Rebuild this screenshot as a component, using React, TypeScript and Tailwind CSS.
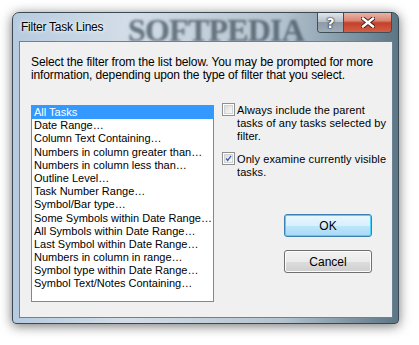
import React from "react";

const items = [
  "All Tasks",
  "Date Range…",
  "Column Text Containing…",
  "Numbers in column greater than…",
  "Numbers in column less than…",
  "Outline Level…",
  "Task Number Range…",
  "Symbol/Bar type…",
  "Some Symbols within Date Range…",
  "All Symbols within Date Range…",
  "Last Symbol within Date Range…",
  "Numbers in column in range…",
  "Symbol type within Date Range…",
  "Symbol Text/Notes Containing…",
];

const font = "font-['Segoe_UI','Liberation_Sans',Arial,sans-serif]";

function Checkbox({ checked }: { checked: boolean }) {
  return (
    <div className="w-[13px] h-[13px] shrink-0 border border-[#8e8f8f] bg-white p-[1px] mt-[-1px]">
      <div className="w-full h-full border border-[#d0d2d6] bg-gradient-to-br from-[#dcdcdc] to-[#fafafa] relative">
        {checked && (
          <svg viewBox="0 0 9 9" className="absolute inset-0 w-full h-full">
            <path d="M1.5 4.5 L3.5 7 L7.8 1.2" fill="none" stroke="#3c5aa8" strokeWidth="1.6" />
          </svg>
        )}
      </div>
    </div>
  );
}

export default function App() {
  return (
    <div className={`w-[419px] h-[345px] bg-white overflow-hidden ${font} text-[12px] text-black`}>
      <div className="ml-[12px] mt-[12px] w-[387px] h-[312px] rounded-t-[7px] rounded-b-[4px] border border-[#3a4953] shadow-[0_2px_12px_rgba(0,0,0,0.55)] bg-[linear-gradient(to_right,#b6cbe0_0%,#d3dde7_30%,#b4c3cf_70%,#5c7685_100%)] flex flex-col relative overflow-hidden">
        {/* watermark */}
        <div className="absolute left-[115px] top-[-1px] pointer-events-none text-[32px] leading-[36px] font-bold font-['Liberation_Serif',serif] tracking-[-0.8px] whitespace-nowrap text-[#3f4f5b] opacity-70 blur-[1.2px] [text-shadow:0_0_3px_#8899a6]">
          SOFTPEDIA
        </div>
        {/* title bar */}
        <div className="h-[28px] flex items-start relative">
          <div className="pl-[8px] pt-[6px] leading-[16px] text-[12px] tracking-[-0.25px] text-black [text-shadow:0_0_6px_#ffffff,0_0_3px_#ffffff]">
            Filter Task Lines
          </div>
          <div className="ml-auto mr-[6px] flex h-[20px] border border-t-0 border-[#3f4f5a] rounded-b-[4px] overflow-hidden">
            <div className="w-[26px] h-full bg-[linear-gradient(to_bottom,#dfe5ea_0%,#b8c2cb_45%,#8e9aa6_50%,#9fabb6_100%)] border-r border-[#3f4f5a] flex items-center justify-center">
              <span className="text-white font-bold text-[14px] leading-none font-['DejaVu_Sans',sans-serif] [text-shadow:0_0_1px_#1d2a33,0_0_1px_#1d2a33,0_0_2px_#1d2a33]">?</span>
            </div>
            <div className="w-[47px] h-full bg-[linear-gradient(to_bottom,#eab3a6_0%,#d98572_40%,#c4402a_52%,#d16046_100%)] flex items-center justify-center">
              <svg width="14" height="11" viewBox="0 0 14 11">
                <path d="M2 1.5 L12 9.5 M12 1.5 L2 9.5" stroke="#3a1b15" strokeWidth="4.2" strokeLinecap="square" />
                <path d="M2 1.5 L12 9.5 M12 1.5 L2 9.5" stroke="#ffffff" strokeWidth="2.4" strokeLinecap="square" />
              </svg>
            </div>
          </div>
        </div>
        {/* client */}
        <div className="ml-[6px] mr-[5px] mb-[5px] flex-1 border border-[#6c8193] bg-[#f0f0f0] relative">
          <p className="pl-[11px] pt-[14px] leading-[13px] whitespace-nowrap tracking-[-0.12px]">
            Select the filter from the list below. You may be prompted for more
            <br />
            information, depending upon the type of filter that you select.
          </p>
          <div className="flex items-start mt-[23px] ml-[11px]">
            <div className="w-[183px] h-[197px] border border-[#828790] bg-white text-[11px]">
              {items.map((it, i) => (
                <div
                  key={it}
                  className={`h-[13.2px] leading-[13px] pl-[2px] whitespace-nowrap ${
                    i === 0 ? "bg-[#3399ff] text-white" : "text-black"
                  }`}
                >
                  {it}
                </div>
              ))}
            </div>
            <div className="ml-[8px] mt-[-1px] flex flex-col">
              <div className="flex items-start gap-[2px]">
                <Checkbox checked={false} />
                <div className="leading-[13px] whitespace-nowrap text-[11px] tracking-[0.1px]">
                  Always include the parent
                  <br />
                  tasks of any tasks selected by
                  <br />
                  filter.
                </div>
              </div>
              <div className="flex items-start gap-[2px] mt-[10px]">
                <Checkbox checked={true} />
                <div className="leading-[13px] whitespace-nowrap text-[11px] tracking-[0.1px]">
                  Only examine currently visible
                  <br />
                  tasks.
                </div>
              </div>
              <div className="ml-[62px] mt-[35px] w-[88px] h-[23px] rounded-[3px] border border-[#3c7fb1] shadow-[inset_0_0_0_1px_#48d5fc] bg-[linear-gradient(to_bottom,#eaf6fd_0%,#d9f0fc_50%,#bee6fd_51%,#a7d9f5_100%)] flex items-center justify-center leading-none">
                OK
              </div>
              <div className="ml-[62px] mt-[13px] w-[88px] h-[23px] rounded-[3px] border border-[#707070] shadow-[inset_0_0_0_1px_#fcfcfc] bg-[linear-gradient(to_bottom,#f2f2f2_0%,#ebebeb_50%,#dddddd_51%,#cfcfcf_100%)] flex items-center justify-center leading-none">
                Cancel
              </div>
            </div>
          </div>
        </div>
      </div>
    </div>
  );
}
